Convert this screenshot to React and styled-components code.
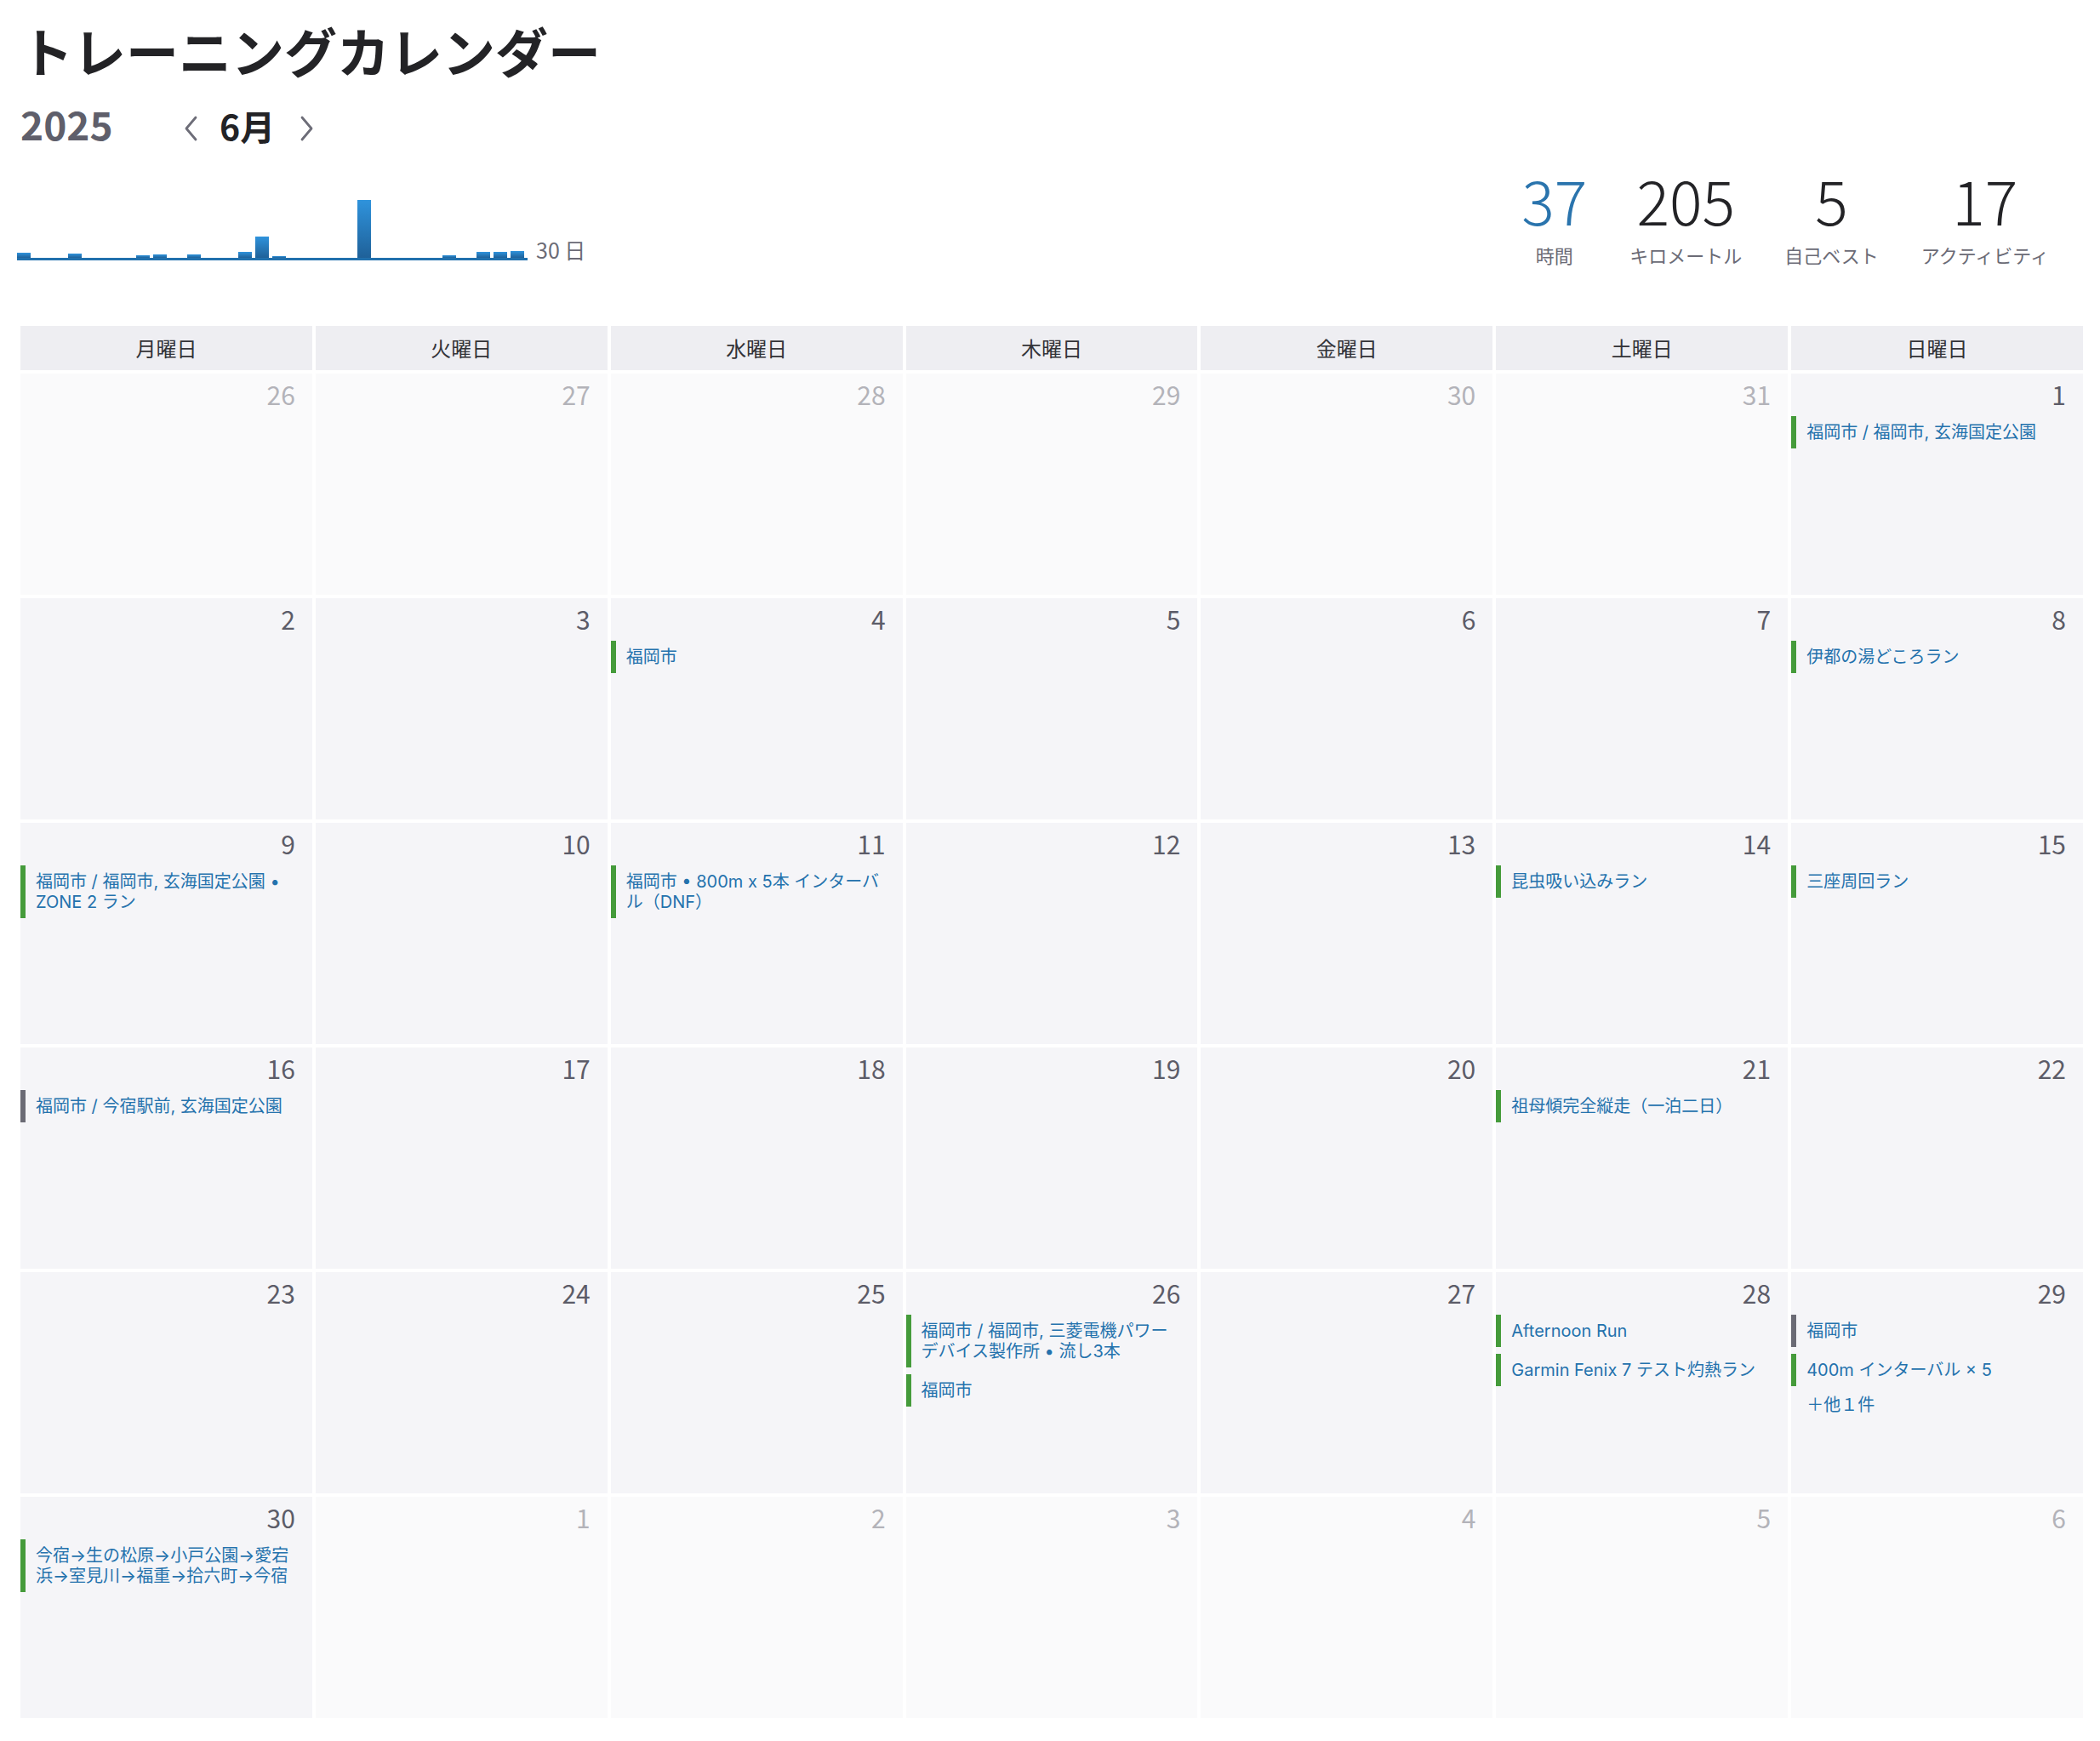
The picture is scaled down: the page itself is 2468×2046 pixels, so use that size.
import React from 'react';
import styled, { createGlobalStyle } from 'styled-components';

const colors = {
  text: '#232326',
  muted: '#6b6b76',
  faint: '#b3b3b9',
  link: '#2472ad',
  green: '#459b3b',
  gray: '#6b6b75',
  headerBg: '#eeeef2',
  cellBg: '#f5f5f8',
  outBg: '#fafafb',
};

const GlobalStyle = createGlobalStyle`
  html, body {
    margin: 0;
    padding: 0;
    background: #fff;
  }
  body {
    font-family: "Noto Sans CJK JP", "Noto Sans", sans-serif;
    color: ${colors.text};
  }
`;

const Page = styled.div`
  padding: 17px 20px 28px 24px;
`;

const Title = styled.h1`
  margin: 0;
  font-size: 62px;
  line-height: 84px;
  font-weight: 700;
  color: ${colors.text};
`;

const YearRow = styled.div`
  display: flex;
  align-items: baseline;
  margin-top: 16px;
  height: 56px;
`;

const Year = styled.span`
  width: 190px;
  font-size: 46px;
  line-height: 56px;
  font-weight: 700;
  color: #5f5f6b;
`;

const NavButton = styled.button`
  align-self: center;
  display: flex;
  align-items: center;
  justify-content: center;
  width: 22px;
  height: 30px;
  margin-top: 12px;
  padding: 0;
  border: 0;
  background: none;
  cursor: pointer;
`;

const Month = styled.span`
  margin: 0 26px 0 22px;
  font-size: 41px;
  line-height: 56px;
  font-weight: 700;
  color: ${colors.text};
`;

const SummaryRow = styled.div`
  display: flex;
  align-items: flex-end;
  justify-content: space-between;
  margin-top: 25px;
`;

const Chart = styled.div`
  display: flex;
  align-items: flex-end;
  margin: 0 0 8px -4px;
`;

const Bars = styled.div`
  display: grid;
  grid-template-columns: repeat(30, 20px);
  align-items: end;
  height: 72px;
  border-bottom: 3px solid #2170ad;
`;

const Bar = styled.div`
  width: 16px;
  background: linear-gradient(180deg, #2f93dc 0%, #1f6199 100%);
`;

const ChartLabel = styled.span`
  margin-left: 10px;
  font-size: 25px;
  line-height: 25px;
  color: ${colors.muted};
`;

const Stats = styled.div`
  display: flex;
  gap: 50px;
  margin-right: 40px;
`;

const Stat = styled.div`
  display: flex;
  flex-direction: column;
  align-items: center;
`;

const StatValue = styled.span`
  font-size: 72px;
  line-height: 72px;
  font-weight: 300;
  color: ${(p) => (p.$accent ? '#2a74ad' : colors.text)};
`;

const StatLabel = styled.span`
  margin-top: 14px;
  font-size: 22px;
  line-height: 30px;
  color: ${colors.muted};
`;

const Calendar = styled.div`
  display: grid;
  grid-template-columns: repeat(7, 1fr);
  grid-template-rows: 52px repeat(6, 260px);
  gap: 4px;
  margin-top: 69px;
`;

const DayHeader = styled.div`
  background: ${colors.headerBg};
  text-align: center;
  font-size: 24px;
  line-height: 52px;
  color: #333338;
`;

const DayCell = styled.div`
  display: flex;
  flex-direction: column;
  padding-top: 6px;
  background: ${(p) => (p.$muted ? colors.outBg : colors.cellBg)};
  overflow: hidden;
`;

const DayNumber = styled.div`
  padding-right: 20px;
  text-align: right;
  font-size: 30px;
  line-height: 36px;
  color: ${(p) => (p.$muted ? colors.faint : '#5c5c68')};
`;

const Entries = styled.div`
  display: flex;
  flex-direction: column;
  gap: 8px;
  margin-top: 8px;
`;

const Entry = styled.a`
  display: block;
  padding: 7px 24px 7px 12px;
  border-left: 6px solid ${(p) => (p.$kind === 'gray' ? colors.gray : colors.green)};
  font-family: Inter, "Noto Sans CJK JP", sans-serif;
  font-size: 20px;
  line-height: 24px;
  color: ${colors.link};
  text-decoration: none;
`;

const More = styled.a`
  display: block;
  padding-left: 18px;
  font-size: 20px;
  line-height: 26px;
  color: ${colors.link};
  text-decoration: none;
`;

const Chevron = ({ dir }) => (
  <svg width="22" height="30" viewBox="0 0 22 30" fill="none">
    <polyline
      points={dir === 'left' ? '16,2 5,15 16,28' : '6,2 17,15 6,28'}
      stroke="#6d6d78"
      strokeWidth="2.8"
      strokeLinecap="round"
      strokeLinejoin="round"
    />
  </svg>
);

const dailyVolume = {
  1: 6, 4: 5, 8: 3, 9: 4, 11: 4, 14: 7, 15: 25, 16: 2,
  21: 68, 26: 3, 28: 7, 29: 7, 30: 8,
};

const weekdays = ['月曜日', '火曜日', '水曜日', '木曜日', '金曜日', '土曜日', '日曜日'];

const g = (title) => ({ kind: 'green', title });
const gr = (title) => ({ kind: 'gray', title });

const activities = {
  1: [g('福岡市 / 福岡市, 玄海国定公園')],
  4: [g('福岡市')],
  8: [g('伊都の湯どころラン')],
  9: [g('福岡市 / 福岡市, 玄海国定公園 • ZONE 2 ラン')],
  11: [g('福岡市 • 800m x 5本 インターバル（DNF）')],
  14: [g('昆虫吸い込みラン')],
  15: [g('三座周回ラン')],
  16: [gr('福岡市 / 今宿駅前, 玄海国定公園')],
  21: [g('祖母傾完全縦走（一泊二日）')],
  26: [g('福岡市 / 福岡市, 三菱電機パワーデバイス製作所 • 流し3本'), g('福岡市')],
  28: [g('Afternoon Run'), g('Garmin Fenix 7 テスト灼熱ラン')],
  29: [gr('福岡市'), g('400m インターバル × 5')],
  30: [g('今宿→生の松原→小戸公園→愛宕浜→室見川→福重→拾六町→今宿')],
};

const moreCount = { 29: 1 };

const buildDays = () => {
  const days = [];
  [26, 27, 28, 29, 30, 31].forEach((d) => days.push({ day: d, muted: true }));
  for (let d = 1; d <= 30; d += 1) days.push({ day: d, muted: false });
  for (let d = 1; d <= 6; d += 1) days.push({ day: d, muted: true });
  return days;
};

const App = () => (
  <Page>
    <GlobalStyle />
    <Title>トレーニングカレンダー</Title>
    <YearRow>
      <Year>2025</Year>
      <NavButton aria-label="前の月"><Chevron dir="left" /></NavButton>
      <Month>6月</Month>
      <NavButton aria-label="次の月"><Chevron dir="right" /></NavButton>
    </YearRow>
    <SummaryRow>
      <Chart>
        <Bars>
          {Array.from({ length: 30 }, (_, i) => (
            <Bar key={i} style={{ height: `${dailyVolume[i + 1] || 0}px` }} />
          ))}
        </Bars>
        <ChartLabel>30 日</ChartLabel>
      </Chart>
      <Stats>
        <Stat>
          <StatValue $accent>37</StatValue>
          <StatLabel>時間</StatLabel>
        </Stat>
        <Stat>
          <StatValue>205</StatValue>
          <StatLabel>キロメートル</StatLabel>
        </Stat>
        <Stat>
          <StatValue>5</StatValue>
          <StatLabel>自己ベスト</StatLabel>
        </Stat>
        <Stat>
          <StatValue>17</StatValue>
          <StatLabel>アクティビティ</StatLabel>
        </Stat>
      </Stats>
    </SummaryRow>
    <Calendar>
      {weekdays.map((w) => (
        <DayHeader key={w}>{w}</DayHeader>
      ))}
      {buildDays().map(({ day, muted }, i) => {
        const list = muted ? [] : activities[day] || [];
        const more = muted ? 0 : moreCount[day] || 0;
        return (
          <DayCell key={i} $muted={muted}>
            <DayNumber $muted={muted}>{day}</DayNumber>
            {(list.length > 0 || more > 0) && (
              <Entries>
                {list.map((a, j) => (
                  <Entry key={j} href="#" $kind={a.kind}>{a.title}</Entry>
                ))}
                {more > 0 && <More href="#">＋他１件</More>}
              </Entries>
            )}
          </DayCell>
        );
      })}
    </Calendar>
  </Page>
);

export default App;
